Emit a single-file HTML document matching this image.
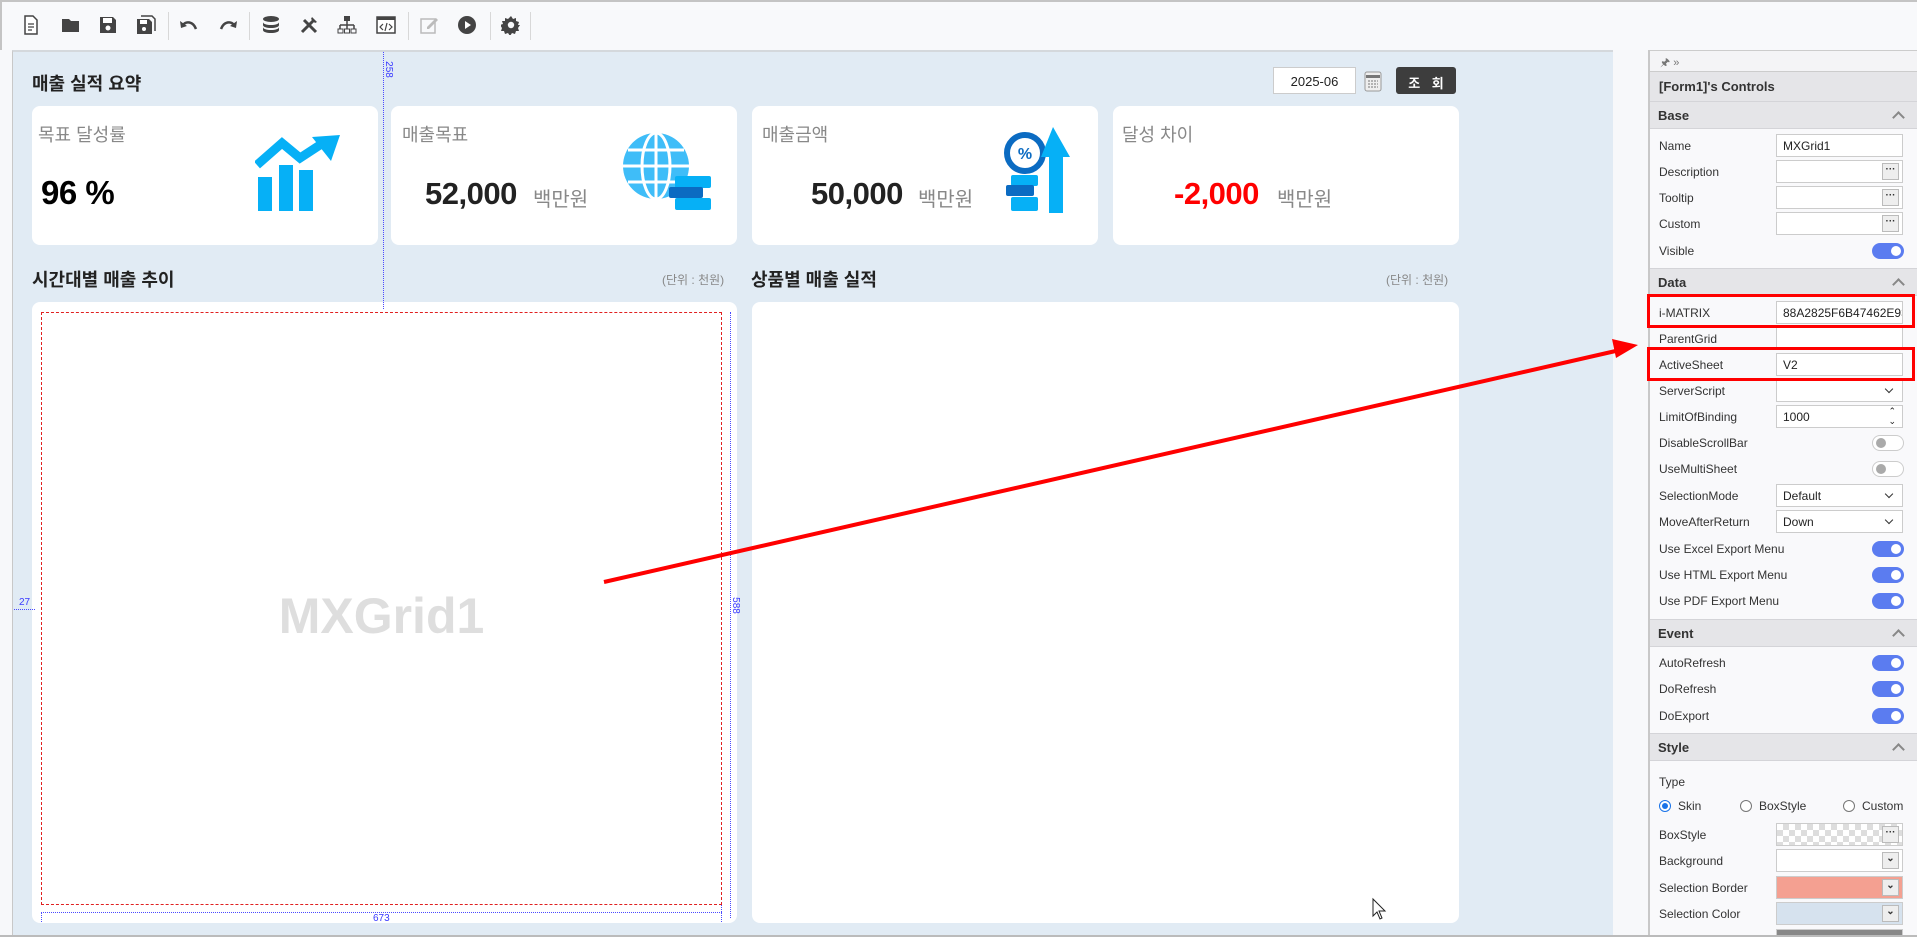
<!DOCTYPE html>
<html><head><meta charset="utf-8"><style>
*{margin:0;padding:0;box-sizing:border-box}
body{width:1917px;height:937px;overflow:hidden;background:#f7f8fa;font-family:"Liberation Sans","Noto Sans CJK KR",sans-serif;position:relative}
.a{position:absolute}
.tb{left:0;top:0;width:1917px;height:50px;background:#f8f9fb;border-top:2px solid #c4c4c4;border-left:2px solid #c4c4c4}
.sep{top:12px;width:1px;height:28px;background:#d8d8d8}
.ic{top:15px;width:20px;height:20px}
.canvas{left:12px;top:50px;width:1601px;height:887px;background:#e1ebf4;border-top:2px solid #d4d8dc;border-left:1px solid #c8c8c8;border-bottom:2px solid #bbb}
.card{background:#fff;border-radius:8px}
.lbl{font-size:18px;color:#888}
.val{font-size:31px;font-weight:bold;color:#222;letter-spacing:-0.5px}
.unit{font-size:20px;color:#888}
.h{font-size:18px;font-weight:bold;color:#222}
.u{font-size:12px;color:#888}
.panel{left:1648px;top:50px;width:269px;height:887px;background:#f9f9fb;border-left:2px solid #c8c8c8}
.pl{left:1659px;font-size:12px;color:#333}
.sec{left:1650px;width:267px;height:28px;background:#e5e5e8;border-top:1px solid #d4d4d8;border-bottom:1px solid #d4d4d8;font-size:13px;font-weight:bold;color:#333;padding:6px 0 0 8px}
.sec:after{content:"";position:absolute;right:14px;top:11px;width:7px;height:7px;border-left:2px solid #888;border-top:2px solid #888;transform:rotate(45deg)}
.in{left:1776px;width:127px;height:23px;background:#fff;border:1px solid #ccc;font-size:12px;color:#222;padding:4px 0 0 6px}
.btn3{right:3px;top:2px;width:17px;height:17px;background:#eee;border:1px solid #bbb;font-size:10px;line-height:12px;text-align:center;color:#333;font-weight:bold}
.tg{left:1872px;width:32px;height:16px;border-radius:8px;background:#5b7cf0}
.tg:after{content:"";position:absolute;right:3px;top:3px;width:10px;height:10px;border-radius:5px;background:#fff}
.tgo{left:1872px;width:32px;height:16px;border-radius:8px;background:#fff;border:1px solid #ccc}
.tgo:after{content:"";position:absolute;left:3px;top:2px;width:10px;height:10px;border-radius:5px;background:#aaa}
.dd:after{content:"";position:absolute;right:10px;top:6px;width:5px;height:5px;border-right:1.5px solid #333;border-bottom:1.5px solid #333;transform:rotate(45deg)}
.chk{background-color:#fff;background-image:linear-gradient(45deg,#ddd 25%,transparent 25%,transparent 75%,#ddd 75%),linear-gradient(45deg,#ddd 25%,transparent 25%,transparent 75%,#ddd 75%);background-size:12px 12px;background-position:0 0,6px 6px}
.rb{width:12px;height:12px;border-radius:6px;border:1px solid #777;background:#fff}
.blue{color:#3a3aff;font-size:10px}
</style></head><body>
<div class="a tb"></div>
<svg class="a ic" style="left:21px" viewBox="0 0 20 20"><path d="M4 1h8l4 4v14H4z" fill="#fff" stroke="#444" stroke-width="1.5"/><path d="M7 9h6M7 12h6M7 15h4" stroke="#444" stroke-width="1.3"/></svg>
<svg class="a ic" style="left:61px" viewBox="0 0 20 20"><path d="M1 4h7l2 2h8v11H1z" fill="#444"/></svg>
<svg class="a ic" style="left:98px" viewBox="0 0 20 20"><path d="M2 2h13l3 3v13H2z" fill="#444"/><rect x="5" y="3" width="9" height="5" fill="#fff"/><circle cx="10" cy="13" r="2.5" fill="#fff"/></svg>
<svg class="a ic" style="left:136px" viewBox="0 0 20 20"><path d="M5 1h11l3 3v12" fill="none" stroke="#444" stroke-width="1.5"/><path d="M1 4h12l3 3v12H1z" fill="#444"/><rect x="4" y="5" width="7" height="4" fill="#fff"/><circle cx="8" cy="14" r="2" fill="#fff"/></svg>
<div class="a sep" style="left:168px"></div>
<svg class="a ic" style="left:179px" viewBox="0 0 20 20"><path d="M17 14C14 6 7 6 4 10" fill="none" stroke="#444" stroke-width="2.5"/><path d="M1 6l1 7 6-2z" fill="#444"/></svg>
<svg class="a ic" style="left:218px" viewBox="0 0 20 20"><path d="M3 14C6 6 13 6 16 10" fill="none" stroke="#444" stroke-width="2.5"/><path d="M19 6l-1 7-6-2z" fill="#444"/></svg>
<div class="a sep" style="left:249px"></div>
<svg class="a ic" style="left:261px" viewBox="0 0 20 20"><ellipse cx="10" cy="4" rx="8" ry="3" fill="#444"/><path d="M2 7c0 4 16 4 16 0v3c0 4-16 4-16 0zM2 12c0 4 16 4 16 0v3c0 4-16 4-16 0z" fill="#444"/></svg>
<svg class="a ic" style="left:299px" viewBox="0 0 20 20"><path d="M3 17L15 5M5 5l12 12" stroke="#444" stroke-width="3"/><path d="M13 2l5 5-2 1-4-4z" fill="#444"/></svg>
<svg class="a ic" style="left:337px" viewBox="0 0 20 20"><rect x="7" y="1" width="6" height="5" fill="#444"/><path d="M10 6v4M3 10h14M3 10v4M10 10v4M17 10v4" stroke="#444" stroke-width="1.5"/><rect x="1" y="14" width="5" height="4" fill="none" stroke="#444"/><rect x="7.5" y="14" width="5" height="4" fill="none" stroke="#444"/><rect x="14" y="14" width="5" height="4" fill="none" stroke="#444"/></svg>
<svg class="a ic" style="left:376px" viewBox="0 0 20 20"><rect x="1" y="2" width="18" height="16" fill="#fff" stroke="#444" stroke-width="1.5"/><rect x="1" y="2" width="18" height="3" fill="#444"/><path d="M7 9l-3 3 3 3M13 9l3 3-3 3M11 8l-2 8" fill="none" stroke="#444" stroke-width="1.2"/></svg>
<div class="a sep" style="left:408px"></div>
<svg class="a ic" style="left:419px" viewBox="0 0 20 20"><rect x="2" y="4" width="14" height="14" fill="none" stroke="#bbb" stroke-width="1.5"/><path d="M8 12l9-9 2 2-9 9H8z" fill="#bbb"/></svg>
<svg class="a ic" style="left:457px" viewBox="0 0 20 20"><circle cx="10" cy="10" r="9" fill="#444"/><path d="M8 6l6 4-6 4z" fill="#fff"/></svg>
<div class="a sep" style="left:490px"></div>
<svg class="a ic" style="left:501px" viewBox="0 0 20 20"><path d="M10 1l2 3 3-1 0 3 3 1-1 3 2 0-2 3 1 3-3 0-1 3-3-1-2 3-2-3-3 1-1-3-3 0 1-3-2-3 3-1-1-3 3 0 0-3 3 1z" fill="#444"/><circle cx="10" cy="10" r="3.2" fill="#f8f9fb"/></svg>
<div class="a sep" style="left:530px"></div>

<div class="a canvas"></div>
<div class="a h" style="left:32px;top:70px">매출 실적 요약</div>
<div class="a" style="left:1273px;top:67px;width:83px;height:27px;background:#fff;border:1px solid #ccc;font-size:13px;color:#222;text-align:center;padding-top:6px">2025-06</div>
<svg class="a" style="left:1364px;top:70px" width="18" height="22" viewBox="0 0 18 22"><rect x="1" y="2" width="16" height="19" rx="2" fill="#eee" stroke="#999"/><rect x="2" y="5" width="14" height="3" fill="#777"/><path d="M4 11h10M4 14h10M4 17h10" stroke="#777" stroke-dasharray="2 1"/></svg>
<div class="a" style="left:1396px;top:67px;width:60px;height:27px;background:#3d3d3d;border-radius:3px;color:#fff;font-size:13px;font-weight:bold;text-align:center;padding-top:6px;padding-left:4px;letter-spacing:4px">조 회</div>

<div class="a card" style="left:32px;top:106px;width:346px;height:139px"></div>
<div class="a card" style="left:391px;top:106px;width:346px;height:139px"></div>
<div class="a card" style="left:752px;top:106px;width:346px;height:139px"></div>
<div class="a card" style="left:1113px;top:106px;width:346px;height:139px"></div>

<div class="a lbl" style="left:38px;top:121px">목표 달성률</div>
<div class="a val" style="left:41px;top:174px;color:#000;font-size:33px">96 %</div>
<svg class="a" style="left:255px;top:135px" width="86" height="76" viewBox="0 0 86 76"><path d="M2 30L27 8 45 23 68 8" fill="none" stroke="#06b0f6" stroke-width="9"/><path d="M57 2L85 0 76 26z" fill="#06b0f6"/><rect x="3" y="42" width="14" height="34" fill="#06b0f6"/><rect x="24" y="30" width="14" height="46" fill="#06b0f6"/><rect x="44" y="35" width="14" height="41" fill="#06b0f6"/></svg>

<div class="a lbl" style="left:402px;top:121px">매출목표</div>
<div class="a val" style="left:425px;top:176px">52,000</div>
<div class="a unit" style="left:533px;top:183px">백만원</div>
<svg class="a" style="left:620px;top:130px" width="92" height="80" viewBox="0 0 92 80"><circle cx="36" cy="36" r="33" fill="#3fbdf8"/><g stroke="#fff" stroke-width="3" fill="none"><ellipse cx="36" cy="36" rx="14" ry="33"/><path d="M36 3v66M3 36h66M8 20h56M8 52h56"/></g><rect x="55" y="46" width="36" height="12" rx="2" fill="#06b0f6"/><rect x="49" y="57" width="34" height="11" rx="2" fill="#0b6bc2"/><rect x="55" y="68" width="36" height="12" rx="2" fill="#06b0f6"/></svg>

<div class="a lbl" style="left:762px;top:121px">매출금액</div>
<div class="a val" style="left:811px;top:176px">50,000</div>
<div class="a unit" style="left:918px;top:183px">백만원</div>
<svg class="a" style="left:1003px;top:127px" width="80" height="86" viewBox="0 0 80 86"><circle cx="22" cy="26" r="18" fill="#fff" stroke="#0b6bc2" stroke-width="6"/><text x="22" y="32" font-family="Liberation Sans" font-weight="bold" font-size="16" fill="#0b6bc2" text-anchor="middle">%</text><path d="M50 0L67 30H60V86H46V30H38z" fill="#06b0f6"/><rect x="8" y="48" width="27" height="11" rx="2" fill="#06b0f6"/><rect x="3" y="58" width="28" height="11" rx="2" fill="#0b6bc2"/><rect x="8" y="70" width="27" height="14" rx="2" fill="#06b0f6"/></svg>

<div class="a lbl" style="left:1122px;top:121px">달성 차이</div>
<div class="a val" style="left:1174px;top:176px;color:#ff0000">-2,000</div>
<div class="a unit" style="left:1277px;top:183px">백만원</div>

<div class="a h" style="left:32px;top:266px">시간대별 매출 추이</div>
<div class="a u" style="left:662px;top:271px">(단위 : 천원)</div>
<div class="a h" style="left:751px;top:266px">상품별 매출 실적</div>
<div class="a u" style="left:1386px;top:271px">(단위 : 천원)</div>

<div class="a card" style="left:32px;top:302px;width:705px;height:621px"></div>
<div class="a card" style="left:752px;top:302px;width:707px;height:621px"></div>
<div class="a" style="left:41px;top:312px;width:681px;height:593px;border:1px dashed #e02020"></div>
<div class="a" style="left:41px;top:587px;width:681px;text-align:center;font-size:50px;font-weight:bold;color:#dedede">MXGrid1</div>

<div class="a" style="left:383px;top:52px;height:257px;border-left:1.5px dotted #4a4aff"></div>
<div class="a blue" style="left:380px;top:64px;transform:rotate(90deg)">258</div>
<div class="a" style="left:730px;top:312px;height:606px;border-left:1.5px dotted #4a4aff"></div>
<div class="a blue" style="left:727px;top:600px;transform:rotate(90deg)">588</div>
<div class="a" style="left:41px;top:912px;width:681px;border-top:1.5px dotted #4a4aff"></div>
<div class="a" style="left:41px;top:912px;height:10px;border-left:1px dotted #4a4aff"></div>
<div class="a" style="left:721px;top:905px;height:17px;border-left:1px dotted #4a4aff"></div>
<div class="a blue" style="left:373px;top:913px">673</div>
<div class="a" style="left:14px;top:609px;width:21px;border-top:1.5px dotted #4a4aff"></div>
<div class="a blue" style="left:19px;top:597px">27</div>

<div class="a panel"></div>
<div class="a" style="left:1650px;top:50px;width:267px;height:21px;background:#f4f4f6;border-top:1px solid #ccc;font-size:11px;color:#777;padding:3px 0 0 10px">🖈 »</div>
<div class="a" style="left:1650px;top:71px;width:267px;height:30px;background:#e5e5e8;border-top:1px solid #ccc;font-size:13px;font-weight:bold;color:#333;padding:7px 0 0 9px">[Form1]'s Controls</div>
<div class="a sec" style="top:101px">Base</div>
<div class="a pl" style="top:139px">Name</div><div class="a in" style="top:134px">MXGrid1</div>
<div class="a pl" style="top:165px">Description</div><div class="a in" style="top:160px"><div class="a btn3">···</div></div>
<div class="a pl" style="top:191px">Tooltip</div><div class="a in" style="top:186px"><div class="a btn3">···</div></div>
<div class="a pl" style="top:217px">Custom</div><div class="a in" style="top:212px"><div class="a btn3">···</div></div>
<div class="a pl" style="top:244px">Visible</div><div class="a tg" style="top:243px"></div>
<div class="a sec" style="top:268px">Data</div>
<div class="a pl" style="top:306px">i-MATRIX</div><div class="a in" style="top:301px;overflow:hidden;white-space:nowrap">88A2825F6B47462E93</div>
<div class="a pl" style="top:332px">ParentGrid</div><div class="a in" style="top:327px;border-bottom:none;height:22px"></div>
<div class="a pl" style="top:358px">ActiveSheet</div><div class="a in" style="top:353px">V2</div>
<div class="a pl" style="top:384px">ServerScript</div><div class="a in dd" style="top:379px"></div>
<div class="a pl" style="top:410px">LimitOfBinding</div><div class="a in" style="top:405px">1000<span class="a" style="right:6px;top:0;font-size:9px;line-height:10px">⌃<br>⌄</span></div>
<div class="a pl" style="top:436px">DisableScrollBar</div><div class="a tgo" style="top:435px"></div>
<div class="a pl" style="top:462px">UseMultiSheet</div><div class="a tgo" style="top:461px"></div>
<div class="a pl" style="top:489px">SelectionMode</div><div class="a in dd" style="top:484px">Default</div>
<div class="a pl" style="top:515px">MoveAfterReturn</div><div class="a in dd" style="top:510px">Down</div>
<div class="a pl" style="top:542px">Use Excel Export Menu</div><div class="a tg" style="top:541px"></div>
<div class="a pl" style="top:568px">Use HTML Export Menu</div><div class="a tg" style="top:567px"></div>
<div class="a pl" style="top:594px">Use PDF Export Menu</div><div class="a tg" style="top:593px"></div>
<div class="a sec" style="top:619px">Event</div>
<div class="a pl" style="top:656px">AutoRefresh</div><div class="a tg" style="top:655px"></div>
<div class="a pl" style="top:682px">DoRefresh</div><div class="a tg" style="top:681px"></div>
<div class="a pl" style="top:709px">DoExport</div><div class="a tg" style="top:708px"></div>
<div class="a sec" style="top:733px">Style</div>
<div class="a pl" style="top:775px">Type</div>
<div class="a rb" style="left:1659px;top:800px;border-color:#1a73e8"><div class="a" style="left:2px;top:2px;width:6px;height:6px;border-radius:3px;background:#1a73e8"></div></div>
<div class="a pl" style="left:1678px;top:799px">Skin</div>
<div class="a rb" style="left:1740px;top:800px"></div><div class="a pl" style="left:1759px;top:799px">BoxStyle</div>
<div class="a rb" style="left:1843px;top:800px"></div><div class="a pl" style="left:1862px;top:799px">Custom</div>
<div class="a pl" style="top:828px">BoxStyle</div><div class="a in chk" style="top:823px"><div class="a btn3">···</div></div>
<div class="a pl" style="top:854px">Background</div><div class="a in" style="top:849px"><div class="a btn3">⌄</div></div>
<div class="a pl" style="top:881px">Selection Border</div><div class="a in" style="top:876px;background:#f4a091"><div class="a btn3">⌄</div></div>
<div class="a pl" style="top:907px">Selection Color</div><div class="a in" style="top:902px;background:#d6e2ee"><div class="a btn3">⌄</div></div>
<div class="a" style="left:1776px;top:929px;width:127px;height:8px;background:#888;border:1px solid #ccc"></div>
<div class="a" style="left:0;top:935px;width:1917px;height:2px;background:#bbb"></div>

<div class="a" style="left:1647px;top:294px;width:268px;height:34px;border:3px solid #f00"></div>
<div class="a" style="left:1647px;top:347px;width:268px;height:34px;border:3px solid #f00"></div>
<svg class="a" style="left:0;top:0" width="1917" height="937"><line x1="604" y1="582" x2="1620" y2="350" stroke="#f00" stroke-width="4"/><path d="M1638 345L1612 339 1616 358z" fill="#f00"/>
<path d="M1373 899v17l4-4 3 7 2-1-3-7h6z" fill="#fff" stroke="#222"/></svg>
</body></html>
